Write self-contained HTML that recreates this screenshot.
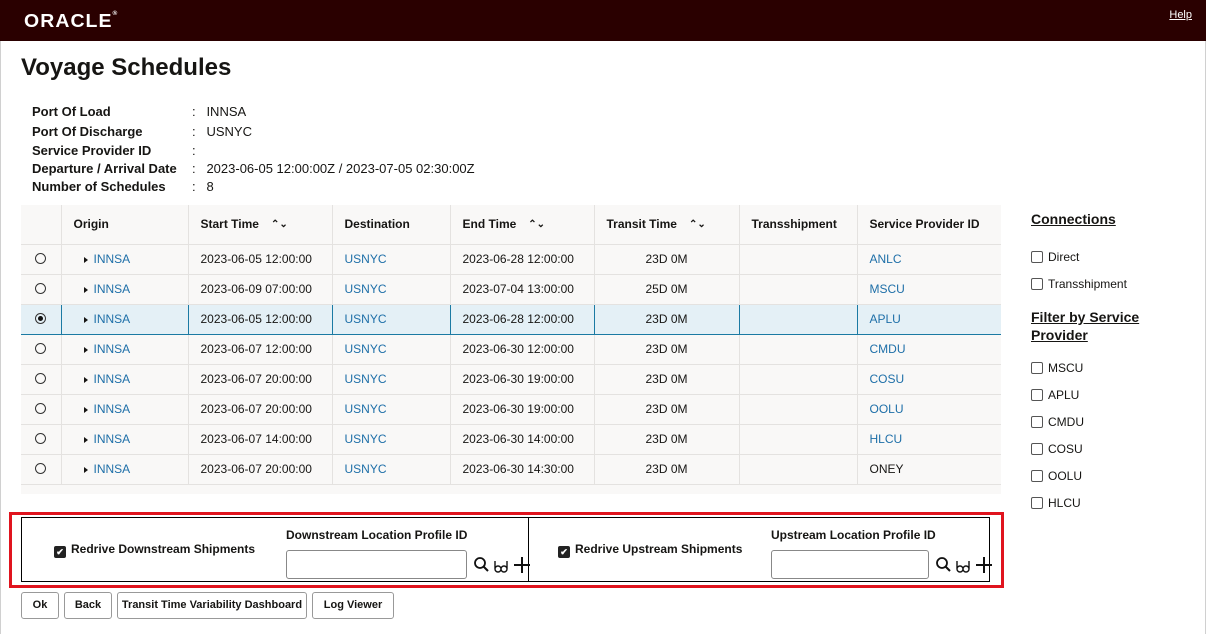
<!DOCTYPE html>
<html><head><meta charset="utf-8"><style>
*{box-sizing:border-box;margin:0;padding:0}
body{width:1206px;height:634px;position:relative;background:#fff;font-family:"Liberation Sans",Arial,sans-serif;font-size:12px;color:#161513;overflow:hidden}
.edge{position:absolute;top:0;width:1px;height:634px;background:#d0d0d0}
.hdr{position:absolute;left:0;top:0;width:1206px;height:41px;background:#2a0000}
.logo{position:absolute;left:24px;top:11px;color:#fff;font-size:18px;letter-spacing:1px;font-weight:bold;transform:scaleX(1.08);transform-origin:left}
.help{position:absolute;right:14px;top:9px;color:#fff;text-decoration:underline;font-size:11px}
h1{position:absolute;left:21px;top:54px;font-size:24px;font-weight:bold}
.info{position:absolute;left:32px;font-size:13px}
.info b{position:absolute;left:0;width:170px;white-space:nowrap}
.info span{position:absolute;left:160px;white-space:nowrap}
.abs{position:absolute}
table{position:absolute;left:21px;top:205px;border-collapse:collapse;width:980px;background:#f9f8f7}
td,th{height:30px;border-left:1px solid #e4e2e0;border-bottom:1px solid #e4e2e0;text-align:left;padding-left:12px;font-size:12px;white-space:nowrap}
td:first-child,th:first-child{border-left:none}
th{height:39px;font-weight:bold}
.l{color:#1e6fa8}
.c{text-align:center;padding-left:0}
.sel td{background:#e4f0f6;border-top:1px solid #1b7aa3;border-bottom:1px solid #1b7aa3;border-left:1px solid #1b7aa3}
.sel td:first-child{border-left:none}
.radio{display:inline-block;width:11px;height:11px;border:1px solid #333;border-radius:50%;position:relative;top:1px}
.radio.on::after{content:"";position:absolute;left:2px;top:2px;width:5px;height:5px;border-radius:50%;background:#111}
.tri{display:inline-block;width:0;height:0;border-left:4px solid #161513;border-top:3.5px solid transparent;border-bottom:3.5px solid transparent;margin:0 6px 0 14px}
.sort{margin-left:12px;font-size:10px;vertical-align:1px}
.side{position:absolute;left:1031px;font-size:12px}
.sh{font-weight:bold;text-decoration:underline;font-size:14px;line-height:18px}
.cb{display:inline-block;width:12px;height:12px;border:1.5px solid #555;border-radius:2px;vertical-align:-2px;margin-right:5px}
.red{position:absolute;left:9px;top:512px;width:995px;height:76px;border:3px solid #e0141e}
.blk{position:absolute;left:21px;top:517px;width:969px;height:65px;border:1px solid #000}
.cbk{display:inline-block;width:12px;height:12px;background:#222;border-radius:2px;color:#fff;font-size:9px;line-height:12px;text-align:center;vertical-align:-2px;margin-right:5px}
.inp{position:absolute;height:29px;border:1px solid #888;border-radius:3px;background:#fff}
.btn{position:absolute;top:592px;height:27px;border:1px solid #999;border-radius:3px;background:#fff;font-weight:bold;font-size:11px;text-align:center;line-height:25px}
</style></head><body>
<div class="edge" style="left:0"></div><div class="edge" style="left:1205px"></div>
<div class="hdr"><div class="logo">ORACLE<span style="font-size:6px;vertical-align:top">®</span></div><div class="help">Help</div></div>
<h1>Voyage Schedules</h1>
<div class="info" style="top:104px"><b>Port Of Load</b><span>:&nbsp;&nbsp;&nbsp;INNSA</span></div>
<div class="info" style="top:124px"><b>Port Of Discharge</b><span>:&nbsp;&nbsp;&nbsp;USNYC</span></div>
<div class="info" style="top:143px"><b>Service Provider ID</b><span>:</span></div>
<div class="info" style="top:161px"><b>Departure / Arrival Date</b><span>:&nbsp;&nbsp;&nbsp;2023-06-05 12:00:00Z / 2023-07-05 02:30:00Z</span></div>
<div class="info" style="top:179px"><b>Number of Schedules</b><span>:&nbsp;&nbsp;&nbsp;8</span></div>
<table>
<colgroup><col style="width:40px"><col style="width:127px"><col style="width:144px"><col style="width:118px"><col style="width:144px"><col style="width:145px"><col style="width:118px"><col style="width:144px"></colgroup>
<tr><th></th><th>Origin</th><th>Start Time<span class="sort">⌃⌄</span></th><th>Destination</th><th>End Time<span class="sort">⌃⌄</span></th><th>Transit Time<span class="sort">⌃⌄</span></th><th>Transshipment</th><th>Service Provider ID</th></tr>
<tr><td class="c"><span class="radio"></span></td><td style="padding-left:8px"><span class="tri"></span><span class="l">INNSA</span></td><td>2023-06-05 12:00:00</td><td class="l">USNYC</td><td>2023-06-28 12:00:00</td><td class="c">23D 0M</td><td></td><td class="l">ANLC</td></tr>
<tr><td class="c"><span class="radio"></span></td><td style="padding-left:8px"><span class="tri"></span><span class="l">INNSA</span></td><td>2023-06-09 07:00:00</td><td class="l">USNYC</td><td>2023-07-04 13:00:00</td><td class="c">25D 0M</td><td></td><td class="l">MSCU</td></tr>
<tr class="sel"><td class="c"><span class="radio on"></span></td><td style="padding-left:8px"><span class="tri"></span><span class="l">INNSA</span></td><td>2023-06-05 12:00:00</td><td class="l">USNYC</td><td>2023-06-28 12:00:00</td><td class="c">23D 0M</td><td></td><td class="l">APLU</td></tr>
<tr><td class="c"><span class="radio"></span></td><td style="padding-left:8px"><span class="tri"></span><span class="l">INNSA</span></td><td>2023-06-07 12:00:00</td><td class="l">USNYC</td><td>2023-06-30 12:00:00</td><td class="c">23D 0M</td><td></td><td class="l">CMDU</td></tr>
<tr><td class="c"><span class="radio"></span></td><td style="padding-left:8px"><span class="tri"></span><span class="l">INNSA</span></td><td>2023-06-07 20:00:00</td><td class="l">USNYC</td><td>2023-06-30 19:00:00</td><td class="c">23D 0M</td><td></td><td class="l">COSU</td></tr>
<tr><td class="c"><span class="radio"></span></td><td style="padding-left:8px"><span class="tri"></span><span class="l">INNSA</span></td><td>2023-06-07 20:00:00</td><td class="l">USNYC</td><td>2023-06-30 19:00:00</td><td class="c">23D 0M</td><td></td><td class="l">OOLU</td></tr>
<tr><td class="c"><span class="radio"></span></td><td style="padding-left:8px"><span class="tri"></span><span class="l">INNSA</span></td><td>2023-06-07 14:00:00</td><td class="l">USNYC</td><td>2023-06-30 14:00:00</td><td class="c">23D 0M</td><td></td><td class="l">HLCU</td></tr>
<tr><td class="c"><span class="radio"></span></td><td style="padding-left:8px"><span class="tri"></span><span class="l">INNSA</span></td><td>2023-06-07 20:00:00</td><td class="l">USNYC</td><td>2023-06-30 14:30:00</td><td class="c">23D 0M</td><td></td><td>ONEY</td></tr>
<tr><td colspan="8" style="height:10px;border:none"></td></tr>
</table>
<div class="side sh" style="top:210px">Connections</div>
<div class="side" style="top:250px"><span class="cb"></span>Direct</div>
<div class="side" style="top:277px"><span class="cb"></span>Transshipment</div>
<div class="side sh" style="top:308px">Filter by Service<br>Provider</div>
<div class="side" style="top:361px"><span class="cb"></span>MSCU</div>
<div class="side" style="top:388px"><span class="cb"></span>APLU</div>
<div class="side" style="top:415px"><span class="cb"></span>CMDU</div>
<div class="side" style="top:442px"><span class="cb"></span>COSU</div>
<div class="side" style="top:469px"><span class="cb"></span>OOLU</div>
<div class="side" style="top:496px"><span class="cb"></span>HLCU</div>
<div class="red"></div>
<div class="blk"></div>
<div class="abs" style="left:528px;top:517px;width:1px;height:65px;background:#000"></div>
<div class="abs" style="left:54px;top:542px;font-weight:bold"><span class="cbk">✔</span>Redrive Downstream Shipments</div>
<div class="abs" style="left:286px;top:528px;font-weight:bold">Downstream Location Profile ID</div>
<div class="inp" style="left:286px;top:550px;width:181px"></div>
<svg class="abs" style="left:473px;top:555px" width="60" height="20" viewBox="0 0 60 20"><circle cx="7" cy="8" r="5" fill="none" stroke="#111" stroke-width="1.8"/><line x1="10.5" y1="11.5" x2="15" y2="16" stroke="#111" stroke-width="2"/><path d="M22 14a3 3 0 1 0 6 0a3 3 0 1 0-6 0M28 14a3 3 0 1 0 6 0a3 3 0 1 0-6 0M22 14V6M34 14V6" fill="none" stroke="#111" stroke-width="1.4"/><path d="M41 10h16M49 2v16" stroke="#111" stroke-width="2"/></svg>
<div class="abs" style="left:558px;top:542px;font-weight:bold"><span class="cbk">✔</span>Redrive Upstream Shipments</div>
<div class="abs" style="left:771px;top:528px;font-weight:bold">Upstream Location Profile ID</div>
<div class="inp" style="left:771px;top:550px;width:158px"></div>
<svg class="abs" style="left:935px;top:555px" width="60" height="20" viewBox="0 0 60 20"><circle cx="7" cy="8" r="5" fill="none" stroke="#111" stroke-width="1.8"/><line x1="10.5" y1="11.5" x2="15" y2="16" stroke="#111" stroke-width="2"/><path d="M22 14a3 3 0 1 0 6 0a3 3 0 1 0-6 0M28 14a3 3 0 1 0 6 0a3 3 0 1 0-6 0M22 14V6M34 14V6" fill="none" stroke="#111" stroke-width="1.4"/><path d="M41 10h16M49 2v16" stroke="#111" stroke-width="2"/></svg>
<div class="btn" style="left:21px;width:38px">Ok</div>
<div class="btn" style="left:64px;width:48px">Back</div>
<div class="btn" style="left:117px;width:190px">Transit Time Variability Dashboard</div>
<div class="btn" style="left:312px;width:82px">Log Viewer</div>
</body></html>
